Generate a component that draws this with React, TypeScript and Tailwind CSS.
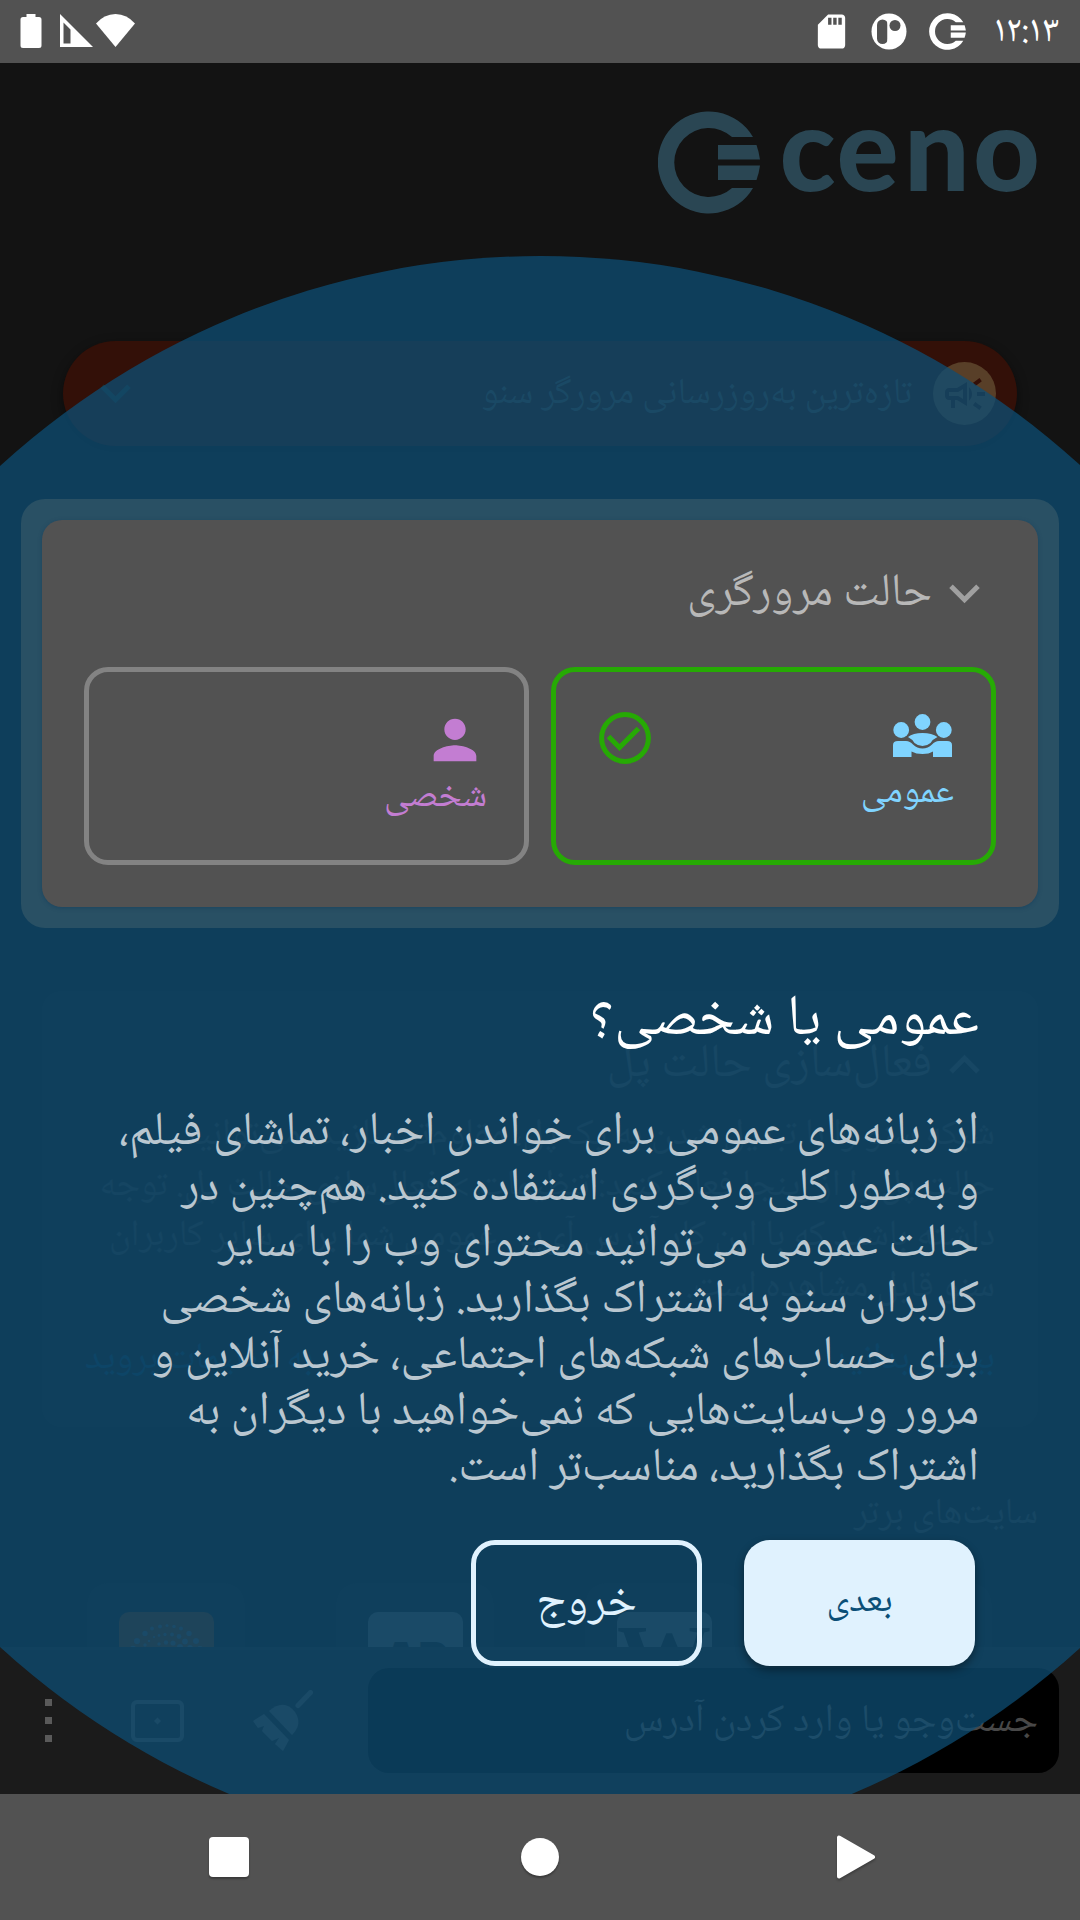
import type { ReactNode } from "react";
import { MdOutlineCampaign, MdPerson, MdSdCard } from "react-icons/md";

function CenoMark({ className }: { className: string }) {
  return (
    <svg viewBox="0 0 102 103" className={className} fill="currentColor">
      <path d="M95 26 A51 51 0 1 0 95 77 H74 A34.5 34.5 0 1 1 74 26 Z" />
      <path d="M60 34 H98.5 Q101 41 102 48.500 H60 Z" />
      <path d="M60 54.500 H102 Q101 62 98.500 69 H60 Z" />
    </svg>
  );
}

function Chevron({ className }: { className: string }) {
  return (
    <svg viewBox="0 0 31 20" className={className} fill="none" stroke="currentColor" strokeWidth="5">
      <path d="M2 2.300 L15.500 15.800 L29 2.300" />
    </svg>
  );
}

function StatusBar() {
  return (
    <div className="flex h-[63px] items-start justify-between bg-[#525252] pr-[21px] pl-5 text-white">
      <div className="flex items-start">
        <span className="h-[63px] pt-[11px] text-[37.8px] leading-[42px] whitespace-nowrap">۱۲:۱۳</span>
        <CenoMark className="mt-[13px] mr-[28px] h-[37px] w-[37px]" />
        <svg viewBox="0 0 36 38" className="mt-[13px] mr-[22px] h-[38px] w-9">
          <ellipse cx="18" cy="18.500" rx="17.500" ry="18" fill="#fff" />
          <rect x="6" y="6.500" width="11" height="24.500" rx="5.500" fill="#525252" />
          <circle cx="24" cy="12.500" r="5.500" fill="#525252" />
          <path d="M17 6 V31" stroke="#fff" strokeWidth="1.500" />
        </svg>
        <MdSdCard className="mt-[11px] mr-[19px] size-[41px]" />
      </div>
      <svg viewBox="0 0 116 35" className="mt-[14px] h-[35px] w-[116px]" fill="#fff">
        <path d="M6.500 0 H15.500 V3 H19 Q21.500 3 21.500 5.500 V31.500 Q21.500 34 19 34 H3 Q.5 34 .5 31.500 V5.500 Q.5 3 3 3 H6.500 Z" />
        <path fillRule="evenodd" d="M40 0 L73 33 H40 Z M43.500 8.500 V29.500 H50.500 V15.500 Z" />
        <path d="M95.500 33 L76 9.500 Q84 .2 95.500 0 Q107 .2 115 9.500 Z" />
      </svg>
    </div>
  );
}

function NewsBanner() {
  return (
    <div className="mx-[63px] mt-[127px] flex h-[105px] items-center rounded-full bg-[#331008] pr-[21px] pl-[37px] shadow-[0_4px_12px_rgba(0,0,0,0.45)]">
      <div className="flex size-[63px] items-center justify-center rounded-full bg-[#583f28]">
        <MdOutlineCampaign className="size-12 text-[#331008]" />
      </div>
      <span className="mr-[21px] text-[36.6px] leading-[50px] whitespace-nowrap text-[#423e38]">
        تازه‌ترین به‌روزرسانی مرورگر سنو
      </span>
      <Chevron className="mr-auto h-5 w-[31px] text-[#26302f]" />
    </div>
  );
}

function BridgeCard() {
  return (
    <div className="mx-[42px] mt-[545px] h-[436px] rounded-[20px] bg-[#171717] px-[43px] pt-[41px] text-[#2c2c2c]">
      <div className="flex h-16 items-center gap-[17px] pr-[15px] text-[#353535]">
        <Chevron className="h-5 w-[31px] rotate-180" />
        <span className="text-[47.2px] leading-16 whitespace-nowrap">فعال‌سازی حالت پل</span>
      </div>
      <div className="mt-[14px] text-[37.3px] leading-[50.7px] whitespace-nowrap">
        <p>شبکه سنو را با تبدیل شدن به یک پل، مقاوم‌تر سازید. می‌توانید</p>
        <p>حالت پل را از اینجا فعال کنید: تنظیمات &gt; فعال‌سازی حالت پل. توجه</p>
        <p className="text-[37px]">داشته باشید که با این کار آدرس آی‌پی عمومی شما برای سایر کاربران</p>
        <p>سنو قابل مشاهده است.</p>
      </div>
      <div className="mt-[21px] flex justify-between text-[37.3px] leading-[50px] whitespace-nowrap text-[#0d2c40]">
        <span>بیشتر بدانید</span>
        <span>به تنظیمات بروید</span>
      </div>
    </div>
  );
}

const DOTS = [
  [33, 16.500, 2], [41, 14.500, 2], [48, 13.500, 1.500], [55, 14.500, 1.800], [62, 16.500, 2],
  [26, 21.500, 2.700], [18, 29, 3.100], [14, 37, 3.200], [70, 21.500, 2.700], [77, 29, 3], [81, 37, 3],
  [35, 25, 1.200], [40, 23.500, 1.400], [46, 22.500, 1.700], [53, 22.500, 2], [60, 24.500, 2.400], [66, 29.500, 2.900],
  [26, 33, 1.700], [30, 29, 1.300], [40, 32, 1.700], [47, 30.500, 2.200], [54, 31, 2.600], [61, 35, 3], [34, 36.500, 1.700], [71, 36, 3],
];

function SiteTile({ children }: { children?: ReactNode }) {
  return (
    <div className="flex h-[72px] w-[158px] justify-center overflow-hidden rounded-t-[21px] bg-[#151515] pt-[29px]">
      {children}
    </div>
  );
}

function TopSites() {
  return (
    <div className="mt-[62px] h-[158px] overflow-hidden">
      <h3 className="pr-[42px] text-[36.6px] leading-[50px] text-[#303030]">سایت‌های برتر</h3>
      <div className="mt-[44px] flex gap-[91px] pr-[88px]">
        <SiteTile />
        <SiteTile>
          <div className="flex h-24 w-[95px] shrink-0 items-start justify-center rounded-[10px] bg-[#424242] pt-[7px] text-[94px] leading-[76px] text-[#151515]">
            <span className="font-['Liberation_Serif'] font-bold">W</span>
          </div>
        </SiteTile>
        <SiteTile>
          <div className="flex h-24 w-[95px] shrink-0 items-start justify-center rounded-[10px] bg-[#424242] pt-[23px] text-[46px] leading-[46px] tracking-[-1px] text-[#151515]">
            <span className="font-['Inter'] font-black">AP</span>
          </div>
        </SiteTile>
        <SiteTile>
          <svg viewBox="0 0 95 96" className="h-24 w-[95px] shrink-0">
            <rect width="95" height="96" rx="10" fill="#50280c" />
            {DOTS.map(([x, y, r]) => (
              <circle key={`${x}-${y}`} cx={x} cy={y} r={r} fill="#404044" />
            ))}
          </svg>
        </SiteTile>
      </div>
    </div>
  );
}

function Toolbar() {
  return (
    <div className="flex h-[147px] items-center border-t-[3px] border-[#1f1f1f] bg-[#1b1b1b] pr-[21px] pb-[3px] text-[#424242]">
      <div className="flex h-[105px] w-[691px] items-center rounded-[21px] bg-black pt-px pr-[21px] text-[39.3px] whitespace-nowrap text-[#484848]">
        جست‌وجو یا وارد کردن آدرس
      </div>
      <svg viewBox="0 0 60 62" className="mr-[55px] h-[62px] w-[60px]" fill="currentColor">
        <path d="M45 15.500 L57.500 2.500" stroke="currentColor" strokeWidth="5" strokeLinecap="round" />
        <path d="M16 21 Q31 8 42 22 Q50 34 39 45 Z" />
        <path d="M11 24 L36 50 L30 61 L22 54 L26 48 L19 51 L9 41 L11 36 L5 38 L0 31 Z" />
      </svg>
      <svg viewBox="0 0 53 42" className="mr-[69px] h-[42px] w-[53px]">
        <rect x="2" y="2" width="49" height="38" rx="4" fill="none" stroke="currentColor" strokeWidth="4" />
        <path d="M26.500 17.500 L30 21 L26.500 24.500 L23 21 Z" fill="currentColor" />
      </svg>
      <div className="mr-[79px] flex flex-col gap-[11px]">
        <i className="size-[7px] bg-[#5a5a5a]" />
        <i className="size-[7px] bg-[#5a5a5a]" />
        <i className="size-[7px] bg-[#5a5a5a]" />
      </div>
    </div>
  );
}

function HomeScreen() {
  return (
    <div className="flex h-[1731px] flex-col bg-[#131313]">
      <div dir="ltr" className="mt-12 mr-[42px] flex h-[103px] w-[380px] shrink-0 text-[#2a4653]">
        <CenoMark className="h-[103px] w-[102px]" />
        <svg viewBox="0 0 278 103" className="h-[103px] w-[278px] overflow-visible" fill="currentColor">
          <text x="19.500 76.500 144 213" y="80" className="font-['Lato'] text-[116px] font-black">ceno</text>
        </svg>
      </div>
      <NewsBanner />
      <BridgeCard />
      <TopSites />
      <Toolbar />
    </div>
  );
}

function ModeOption({ label, tone, icon, checked }: { label: string; tone: string; icon: ReactNode; checked?: boolean }) {
  return (
    <div
      className={`flex flex-1 items-start justify-between rounded-[24px] border-[5px] pr-[37px] pl-[43px] ${checked ? "border-[#26aa04]" : "border-[#838383]"}`}
    >
      <div className={`flex flex-col items-start ${tone}`}>
        {icon}
        <span className="text-[36.9px] leading-[50px] whitespace-nowrap">{label}</span>
      </div>
      {checked && (
        <svg viewBox="0 0 52 52" className="mt-10 size-[52px]" fill="none" stroke="#26aa04" strokeWidth="5">
          <circle cx="26" cy="26" r="23.400" />
          <path d="M9.500 24.500 L20.500 35.500 L39.500 16.500" />
        </svg>
      )}
    </div>
  );
}

function GroupIcon() {
  return (
    <svg viewBox="0 0 59 43" className="mt-[42px] mr-[2px] mb-[11px] h-[43px] w-[59px]" fill="currentColor">
      <circle cx="8.200" cy="16" r="7.900" />
      <circle cx="29.500" cy="8" r="7.900" />
      <circle cx="50.800" cy="16" r="7.900" />
      <path d="M15 23 Q20 19 29.500 19 Q39 19 44.500 23 Q40 25 37.500 29 Q34 32 29.500 32 Q25 32 21.500 29 Q19 25 15 23 Z" />
      <path d="M0 43 V31 Q0 27 5 27 H13 Q17 27 20 30.500 Q24 34.500 29.500 34.500 Q35 34.500 39 30.500 Q42 27 46 27 H54 Q59 27 59 31 V43 H40 V37.500 Q36 40 29.500 40 Q23 40 18.500 37.500 V43 Z" />
    </svg>
  );
}

function ModeCard() {
  return (
    <div className="mx-[21px] h-[429px] rounded-[24px] bg-[#295064] p-[21px]">
      <div className="h-[387px] rounded-[20px] bg-[#525252] px-[42px] pt-[42px] shadow-[0_1px_4px_rgba(0,50,90,0.35)]">
        <div className="flex h-16 items-center gap-[17px] pr-4">
          <Chevron className="h-5 w-[31px] text-[#a0a0a0]" />
          <span className="text-[46.3px] leading-16 whitespace-nowrap text-[#b8b8b8]">حالت مرورگری</span>
        </div>
        <div className="mt-[41px] flex h-[198px] gap-[22px]">
          <ModeOption label="عمومی" tone="text-[#80d4ff]" icon={<GroupIcon />} checked />
          <ModeOption label="شخصی" tone="text-[#c37dd2]" icon={<MdPerson className="mt-9 size-16" />} />
        </div>
      </div>
    </div>
  );
}

function TourPrompt() {
  return (
    <div className="absolute inset-x-0 top-[63px] bottom-[126px] overflow-hidden">
      <div className="absolute top-[193px] left-[-260.500px] size-[1601px] rounded-full bg-[rgba(14,77,116,0.75)]" />
      <div className="relative pt-[436px]">
        <ModeCard />
        <div className="pt-[53px] pr-[101px]">
          <h1 className="text-[57.4px] leading-[78px] whitespace-nowrap text-white">عمومی یا شخصی؟</h1>
          <p className="mt-[45px] text-[47.3px] leading-[56px] whitespace-nowrap text-[#bac7d0]">
            از زبانه‌های عمومی برای خواندن اخبار، تماشای فیلم،
            <br />و به‌طور کلی وب‌گردی استفاده کنید. هم‌چنین در
            <br />حالت عمومی می‌توانید محتوای وب را با سایر
            <br />کاربران سنو به اشتراک بگذارید. زبانه‌های شخصی
            <br />برای حساب‌های شبکه‌های اجتماعی، خرید آنلاین و
            <br />مرور وب‌سایت‌هایی که نمی‌خواهید با دیگران به
            <br />اشتراک بگذارید، مناسب‌تر است.
          </p>
        </div>
        <div className="mt-[44px] flex gap-[42px] pr-[105px]">
          <button className="h-[126px] w-[231px] rounded-[26px] bg-[#e0f2fe] pb-[2px] text-[37.2px] text-[#0b4f77] shadow-[0_4px_8px_rgba(0,0,0,0.4)]">
            بعدی
          </button>
          <button className="h-[126px] w-[231px] rounded-[24px] border-[5px] border-[#e0f2fe] text-[46.8px] text-[#e0f2fe]">
            خروج
          </button>
        </div>
      </div>
    </div>
  );
}

function NavBar() {
  return (
    <div className="flex h-[126px] items-center bg-[#525252] pr-[205px] text-white">
      <svg viewBox="0 0 38 44" className="h-11 w-[38px] drop-shadow-[0_2px_1px_rgba(0,0,0,0.25)]" fill="currentColor" stroke="currentColor" strokeWidth="4" strokeLinejoin="round">
        <path d="M2 2.500 V41.500 L36 22 Z" />
      </svg>
      <div className="mr-[278px] size-[38px] rounded-full bg-white shadow-[0_2px_2px_rgba(0,0,0,0.3)]" />
      <div className="mr-[272px] size-10 rounded-[4px] bg-white shadow-[0_2px_2px_rgba(0,0,0,0.3)]" />
    </div>
  );
}

export default function App() {
  return (
    <div dir="rtl" className="relative h-[1920px] w-[1080px] overflow-hidden font-['Noto_Naskh_Arabic_UI','Noto_Naskh_Arabic',sans-serif]">
      <StatusBar />
      <HomeScreen />
      <TourPrompt />
      <NavBar />
    </div>
  );
}
